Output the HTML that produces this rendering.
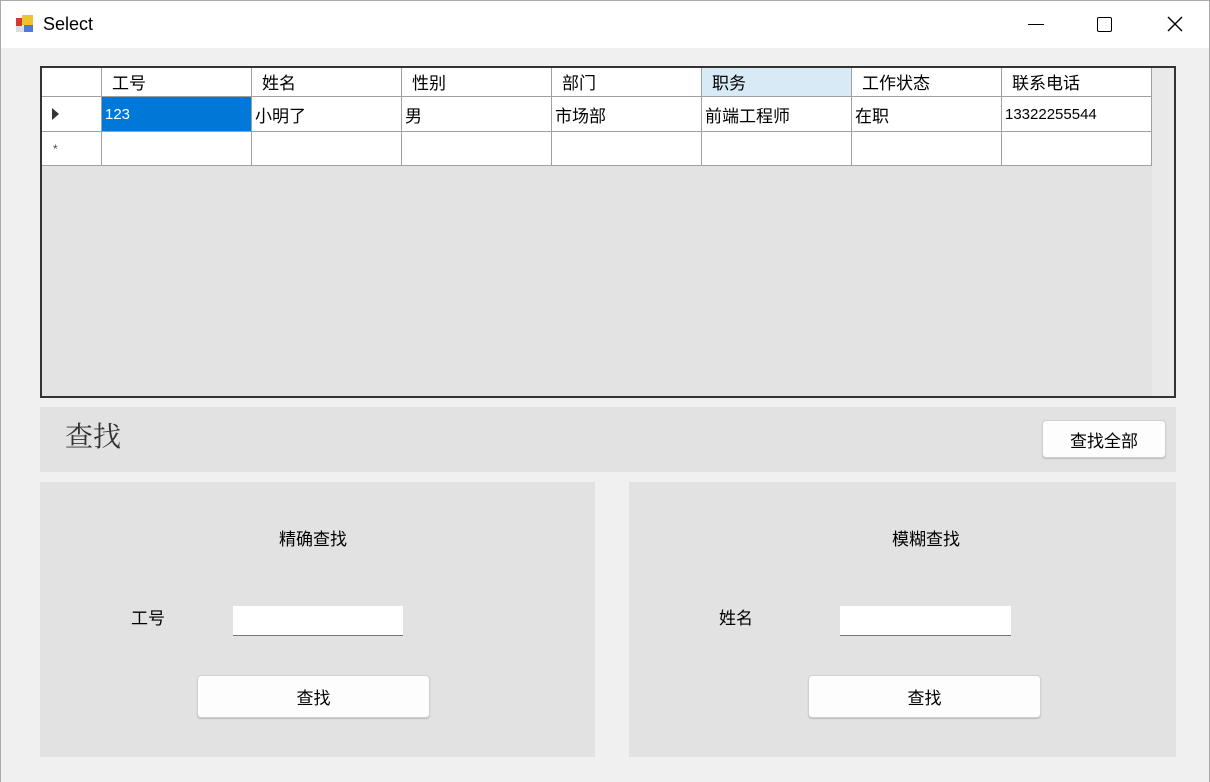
<!DOCTYPE html>
<html><head><meta charset="utf-8"><style>
*{margin:0;padding:0;box-sizing:border-box}
body{width:1210px;height:782px;background:#f0f0f0;font-family:"Liberation Sans","Noto Sans CJK SC",sans-serif;position:relative;overflow:hidden;color:#000}
.a{position:absolute}
.t{font-size:17px;line-height:1}
.cell{position:absolute;border-right:1px solid #a0a0a0;border-bottom:1px solid #a0a0a0;background:#fff;font-size:17px;padding-left:3px;display:flex;align-items:center}
.btn{position:absolute;background:#fdfdfd;border:1px solid #d0d0d0;border-radius:4px;box-shadow:0 1px 1px #bbb;font-size:17px;display:flex;align-items:center;justify-content:center}
.inp{position:absolute;background:#fff;border-bottom:1px solid #777}
</style></head><body>
<div class="a" style="left:0;top:0;width:1210px;height:48px;background:#fff;border-top:1px solid #aaa"></div>
<div class="a" style="left:0;top:0;width:1px;height:782px;background:#aaa"></div>
<div class="a" style="left:1209px;top:0;width:1px;height:782px;background:#aaa"></div>
<svg class="a" style="left:15px;top:14px" width="20" height="20"><rect x="1" y="4" width="6" height="8" fill="#d33"/><rect x="7" y="1" width="11" height="10" fill="#f2c22c"/><rect x="1" y="12" width="8" height="6" fill="#ddd"/><rect x="9" y="11" width="9" height="7" fill="#4a7fd0"/></svg>
<div class="a t" style="left:43px;top:15px;font-size:18px">Select</div>
<div class="a" style="left:1028px;top:24px;width:16px;height:1px;background:#000"></div>
<div class="a" style="left:1097px;top:17px;width:15px;height:15px;border:1.5px solid #000;border-radius:2px"></div>
<svg class="a" style="left:1166px;top:15px" width="18" height="18"><path d="M2 2L16 16M16 2L2 16" stroke="#000" stroke-width="1.4"/></svg>

<div class="a" style="left:40px;top:66px;width:1136px;height:332px;border:2px solid #333;background:#e3e3e3"></div>
<div class="a" style="left:1152px;top:68px;width:22px;height:328px;background:#e9e9e9"></div>
<div class="cell" style="left:42px;top:68px;width:60px;height:29px"></div>
<div class="cell" style="left:42px;top:97px;width:60px;height:35px"><svg width="10" height="14" style="margin-left:6px"><path d="M1 1L8 7L1 13Z" fill="#333"/></svg></div>
<div class="cell" style="left:42px;top:132px;width:60px;height:34px"><span style="font-size:12px;margin-left:8px;color:#444">*</span></div>

<div class="cell" style="left:102px;top:68px;width:150px;height:29px;padding-left:10px;padding-bottom:2px">工号</div>
<div class="cell" style="left:252px;top:68px;width:150px;height:29px;padding-left:10px;padding-bottom:2px">姓名</div>
<div class="cell" style="left:402px;top:68px;width:150px;height:29px;padding-left:10px;padding-bottom:2px">性别</div>
<div class="cell" style="left:552px;top:68px;width:150px;height:29px;padding-left:10px;padding-bottom:2px">部门</div>
<div class="cell" style="left:702px;top:68px;width:150px;height:29px;padding-left:10px;padding-bottom:2px;background:#d9eaf7">职务</div>
<div class="cell" style="left:852px;top:68px;width:150px;height:29px;padding-left:10px;padding-bottom:2px">工作状态</div>
<div class="cell" style="left:1002px;top:68px;width:150px;height:29px;padding-left:10px;padding-bottom:2px">联系电话</div>

<div class="cell" style="left:102px;top:97px;width:150px;height:35px;background:#0078d7;color:#fff;font-size:15px">123</div>
<div class="cell" style="left:252px;top:97px;width:150px;height:35px">小明了</div>
<div class="cell" style="left:402px;top:97px;width:150px;height:35px">男</div>
<div class="cell" style="left:552px;top:97px;width:150px;height:35px">市场部</div>
<div class="cell" style="left:702px;top:97px;width:150px;height:35px">前端工程师</div>
<div class="cell" style="left:852px;top:97px;width:150px;height:35px">在职</div>
<div class="cell" style="left:1002px;top:97px;width:150px;height:35px;font-size:15px">13322255544</div>
<div class="cell" style="left:102px;top:132px;width:150px;height:34px"></div>
<div class="cell" style="left:252px;top:132px;width:150px;height:34px"></div>
<div class="cell" style="left:402px;top:132px;width:150px;height:34px"></div>
<div class="cell" style="left:552px;top:132px;width:150px;height:34px"></div>
<div class="cell" style="left:702px;top:132px;width:150px;height:34px"></div>
<div class="cell" style="left:852px;top:132px;width:150px;height:34px"></div>
<div class="cell" style="left:1002px;top:132px;width:150px;height:34px"></div>

<div class="a" style="left:40px;top:407px;width:1136px;height:65px;background:#e2e2e2"></div>
<div class="a" style="left:65px;top:424px;font-size:28px;line-height:1;color:#333;font-family:'Liberation Serif','Noto Serif CJK SC',serif">查找</div>
<div class="btn" style="left:1042px;top:420px;width:124px;height:38px">查找全部</div>

<div class="a" style="left:40px;top:482px;width:555px;height:275px;background:#e2e2e2"></div>
<div class="a t" style="left:279px;top:531px">精确查找</div>
<div class="a t" style="left:131px;top:610px">工号</div>
<div class="inp" style="left:233px;top:606px;width:170px;height:30px"></div>
<div class="btn" style="left:197px;top:675px;width:233px;height:43px">查找</div>

<div class="a" style="left:629px;top:482px;width:547px;height:275px;background:#e2e2e2"></div>
<div class="a t" style="left:892px;top:531px">模糊查找</div>
<div class="a t" style="left:719px;top:610px">姓名</div>
<div class="inp" style="left:840px;top:606px;width:171px;height:30px"></div>
<div class="btn" style="left:808px;top:675px;width:233px;height:43px">查找</div>
</body></html>
